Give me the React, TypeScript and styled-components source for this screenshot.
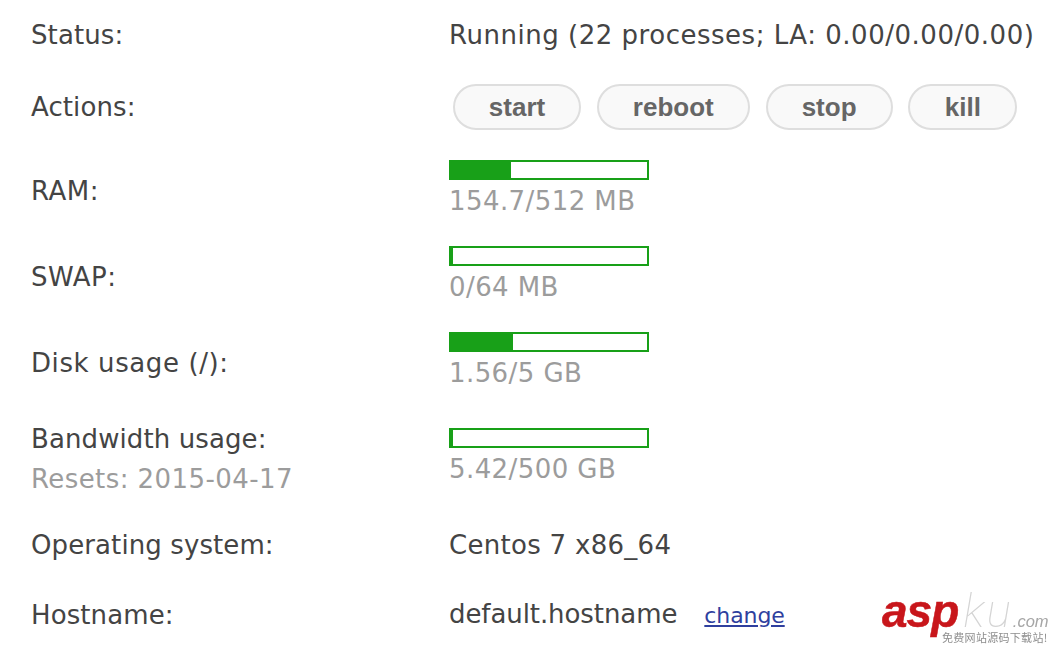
import React from 'react';
import styled, { createGlobalStyle } from 'styled-components';

const GlobalStyle = createGlobalStyle`
  html, body {
    margin: 0;
    padding: 0;
    background: #fff;
  }
  body {
    font-family: Tahoma, Verdana, 'DejaVu Sans', sans-serif;
    color: #444;
  }
`;

const Page = styled.div`
  position: relative;
  width: 1052px;
  height: 648px;
  overflow: hidden;
  padding-left: 31px;
  box-sizing: border-box;
`;

const Row = styled.div<{ $height: number; $align?: string; $pad?: number }>`
  display: grid;
  grid-template-columns: 418px 1fr;
  height: ${(p) => p.$height}px;
  align-items: ${(p) => p.$align || 'center'};
  padding-top: ${(p) => p.$pad || 0}px;
  box-sizing: border-box;
  font-size: 26px;
  line-height: 30px;
  white-space: nowrap;
`;

const Label = styled.div<{ $track?: number; $top?: number }>`
  letter-spacing: ${(p) => p.$track ?? 0.1}px;
  padding-top: ${(p) => p.$top || 0}px;
`;

const Value = styled.div<{ $track?: number }>`
  letter-spacing: ${(p) => p.$track ?? 0.42}px;
`;

const Muted = styled.div`
  color: #9c9c9c;
  letter-spacing: 0.42px;
`;

const LabelBlock = styled.div`
  display: flex;
  flex-direction: column;
  gap: 10px;
  margin-top: -4px;
`;

const Buttons = styled.div`
  display: flex;
  gap: 15.8px;
  margin-left: 4px;
`;

const ActionButton = styled.button<{ $width: number }>`
  width: ${(p) => p.$width}px;
  height: 46px;
  padding: 0;
  border: 2px solid #dedede;
  border-radius: 23px;
  background: #f9f9f9;
  color: #666;
  font-family: 'Liberation Sans', Arial, sans-serif;
  font-weight: 700;
  font-size: 26px;
  line-height: 40px;
`;

const Meter = styled.div`
  display: flex;
  flex-direction: column;
`;

const Track = styled.div`
  width: 200px;
  height: 20px;
  box-sizing: border-box;
  border: 2px solid #18a018;
  background: #fff;
  margin-bottom: 6px;
`;

const Fill = styled.div`
  height: 100%;
  background: #18a018;
`;

const ValueLine = styled.div`
  display: flex;
  align-items: baseline;
`;

const ChangeLink = styled.a`
  margin-left: 27px;
  color: #2f3f9e;
  font-size: 22px;
  letter-spacing: -0.1px;
  text-decoration: underline;
`;

const Logo = styled.div`
  position: absolute;
  left: 882px;
  top: 590px;
  width: 170px;
  height: 58px;
  filter: blur(0.4px);
`;

const LogoWord = styled.div`
  display: flex;
  align-items: baseline;
  height: 42px;
`;

const LogoAsp = styled.span`
  font-family: 'Liberation Sans', Arial, sans-serif;
  font-weight: 700;
  font-style: italic;
  font-size: 46px;
  line-height: 42px;
  letter-spacing: -1px;
  -webkit-text-stroke: 0.5px #c8161b;
  color: #c8161b;
`;

const LogoKu = styled.span`
  margin-left: 5px;
  font-family: Roboto, 'Liberation Sans', Arial, sans-serif;
  font-weight: 100;
  font-style: italic;
  font-size: 46px;
  line-height: 42px;
  letter-spacing: 2px;
  color: #d4d4d4;
`;

const LogoCom = styled.span`
  font-family: 'Liberation Sans', Arial, sans-serif;
  font-style: italic;
  font-size: 16.5px;
  color: #a6a6a6;
`;

const LogoSlogan = styled.div`
  position: absolute;
  left: 60px;
  top: 40px;
  font-family: 'Noto Sans CJK SC', sans-serif;
  font-size: 11px;
  line-height: 14px;
  letter-spacing: 0.3px;
  color: #8e8e8e;
  white-space: nowrap;
`;

const meters = [
  { label: 'RAM:', text: '154.7/512 MB', fill: 30.6, track: 0.5 },
  { label: 'SWAP:', text: '0/64 MB', fill: 1, track: 0.5 },
  { label: 'Disk usage (/):', text: '1.56/5 GB', fill: 31.6, track: 0.6 },
];

const actions = [
  { name: 'start', width: 128 },
  { name: 'reboot', width: 153 },
  { name: 'stop', width: 127 },
  { name: 'kill', width: 109 },
];

const App: React.FC = () => {
  return (
    <Page>
      <GlobalStyle />
      <Row $height={70}>
        <Label>Status:</Label>
        <Value $track={0.52}>Running (22 processes; LA: 0.00/0.00/0.00)</Value>
      </Row>
      <Row $height={74}>
        <Label>Actions:</Label>
        <Buttons>
          {actions.map((a) => (
            <ActionButton key={a.name} $width={a.width}>
              {a.name}
            </ActionButton>
          ))}
        </Buttons>
      </Row>
      {meters.map((m) => (
        <Row key={m.label} $height={86} $align="start" $pad={16}>
          <Label $top={16} $track={m.track}>
            {m.label}
          </Label>
          <Meter>
            <Track>
              <Fill style={{ width: `${m.fill}%` }} />
            </Track>
            <Muted>{m.text}</Muted>
          </Meter>
        </Row>
      ))}
      <Row $height={106} $align="start" $pad={26}>
        <LabelBlock>
          <Label>Bandwidth usage:</Label>
          <Muted>Resets: 2015-04-17</Muted>
        </LabelBlock>
        <Meter>
          <Track>
            <Fill style={{ width: '1%' }} />
          </Track>
          <Muted>5.42/500 GB</Muted>
        </Meter>
      </Row>
      <Row $height={74}>
        <Label>Operating system:</Label>
        <Value $track={0.29}>Centos 7 x86_64</Value>
      </Row>
      <Row $height={66}>
        <Label>Hostname:</Label>
        <ValueLine>
          <Value $track={-0.08}>default.hostname</Value>
          <ChangeLink href="#">change</ChangeLink>
        </ValueLine>
      </Row>
      <Logo>
        <LogoWord>
          <LogoAsp>asp</LogoAsp>
          <LogoKu>ku</LogoKu>
          <LogoCom>.com</LogoCom>
        </LogoWord>
        <LogoSlogan>免费网站源码下载站!</LogoSlogan>
      </Logo>
    </Page>
  );
};

export default App;
